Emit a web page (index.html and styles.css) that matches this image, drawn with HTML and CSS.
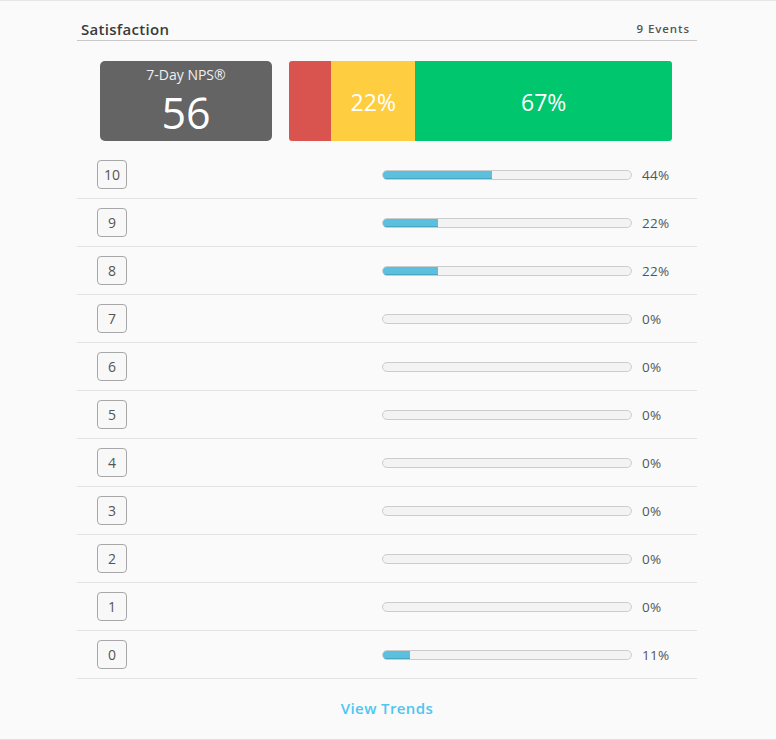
FILE: index.html
```html
<!DOCTYPE html>
<html>
<head>
<meta charset="utf-8">
<link rel="stylesheet" href="styles.css">
</head>
<body>
<div class="page">
  <div class="panel">
    <div class="panel-head">
      <h2 class="title">Satisfaction</h2>
      <span class="events">9 Events</span>
    </div>
    <div class="summary">
      <div class="nps">
        <div class="nps-label">7-Day NPS®</div>
        <div class="nps-value">56</div>
      </div>
      <div class="split">
        <div class="seg seg-red" style="width:11%"></div>
        <div class="seg seg-yellow" style="width:22%">22%</div>
        <div class="seg seg-green" style="width:67%">67%</div>
      </div>
    </div>
    <div class="rows">
      <div class="row"><span class="score">10</span><div class="track"><div class="fill" style="width:44%"></div></div><span class="pct">44%</span></div>
      <div class="row"><span class="score">9</span><div class="track"><div class="fill" style="width:22%"></div></div><span class="pct">22%</span></div>
      <div class="row"><span class="score">8</span><div class="track"><div class="fill" style="width:22%"></div></div><span class="pct">22%</span></div>
      <div class="row"><span class="score">7</span><div class="track"></div><span class="pct">0%</span></div>
      <div class="row"><span class="score">6</span><div class="track"></div><span class="pct">0%</span></div>
      <div class="row"><span class="score">5</span><div class="track"></div><span class="pct">0%</span></div>
      <div class="row"><span class="score">4</span><div class="track"></div><span class="pct">0%</span></div>
      <div class="row"><span class="score">3</span><div class="track"></div><span class="pct">0%</span></div>
      <div class="row"><span class="score">2</span><div class="track"></div><span class="pct">0%</span></div>
      <div class="row"><span class="score">1</span><div class="track"></div><span class="pct">0%</span></div>
      <div class="row"><span class="score">0</span><div class="track"><div class="fill" style="width:11%"></div></div><span class="pct">11%</span></div>
    </div>
    <div class="panel-foot"><a class="trends" href="#">View Trends</a></div>
  </div>
</div>
</body>
</html>
```

FILE: styles.css
```css
html, body {
  margin: 0;
  padding: 0;
  background: #fafafa;
}
body {
  font-family: "Open Sans", "Noto Sans", sans-serif;
  color: #555;
}
.page {
  height: 738px;
  border-top: 1px solid #e6e6e6;
  border-bottom: 1px solid #e0e0e0;
  background: #fafafa;
}
.panel {
  width: 620px;
  margin-left: 77px;
}
.panel-head {
  display: flex;
  justify-content: space-between;
  align-items: flex-end;
  height: 39px;
  border-bottom: 1px solid #c8c8c8;
  padding: 0 7px 0 4px;
}
.title {
  margin: 0;
  font-size: 15px;
  font-weight: 600;
  letter-spacing: 0.3px;
  color: #3a3a3a;
  line-height: 20px;
  padding-bottom: 1px;
}
.events {
  font-size: 11.5px;
  font-weight: 600;
  letter-spacing: 0.9px;
  color: #555;
  line-height: 20px;
  padding-bottom: 1px;
}
.summary {
  display: flex;
  gap: 17px;
  margin: 20px 0 10px 23px;
  height: 80px;
}
.nps {
  width: 172px;
  height: 80px;
  background: #646464;
  border-radius: 5px;
  color: #fff;
  text-align: center;
}
.nps-label {
  font-size: 14px;
  color: #f0f0f0;
  padding-top: 4px;
  line-height: 20px;
}
.nps-value {
  font-size: 43px;
  line-height: 50px;
  font-weight: 400;
  margin-top: 3px;
}
.split {
  display: flex;
  width: 383px;
  height: 80px;
  border-radius: 3px;
  overflow: hidden;
}
.seg {
  display: flex;
  align-items: center;
  justify-content: center;
  color: #fff;
  font-size: 23px;
  font-weight: 400;
  padding-top: 2px;
}
.seg-red { background: #d9534f; }
.seg-yellow { background: #ffcd40; }
.seg-green { background: #00c66e; }
.row {
  display: grid;
  grid-template-columns: 305px 250px 1fr;
  align-items: center;
  height: 47px;
  border-bottom: 1px solid #e3e3e3;
}
.score {
  margin-left: 20px;
  width: 28px;
  height: 27px;
  border: 1px solid #a8a8a8;
  border-radius: 4px;
  background: #f8f8f8;
  display: flex;
  align-items: center;
  justify-content: center;
  font-size: 14px;
  font-weight: 400;
  color: #555;
}
.track {
  height: 8px;
  border: 1px solid #cccccc;
  border-radius: 5px;
  background: #f3f3f3;
  overflow: hidden;
  margin-top: 1px;
}
.fill {
  height: 100%;
  background: #5bc0de;
  box-shadow: inset 0 -1px 0 #4aa6c2;
}
.pct {
  padding-left: 10px;
  font-size: 13.5px;
  letter-spacing: 0.3px;
  color: #555;
}
.panel-foot {
  height: 57px;
  display: flex;
  align-items: center;
  justify-content: center;
}
.trends {
  color: #4dc6f0;
  font-size: 15px;
  font-weight: 600;
  letter-spacing: 0.4px;
  text-decoration: none;
}
```
